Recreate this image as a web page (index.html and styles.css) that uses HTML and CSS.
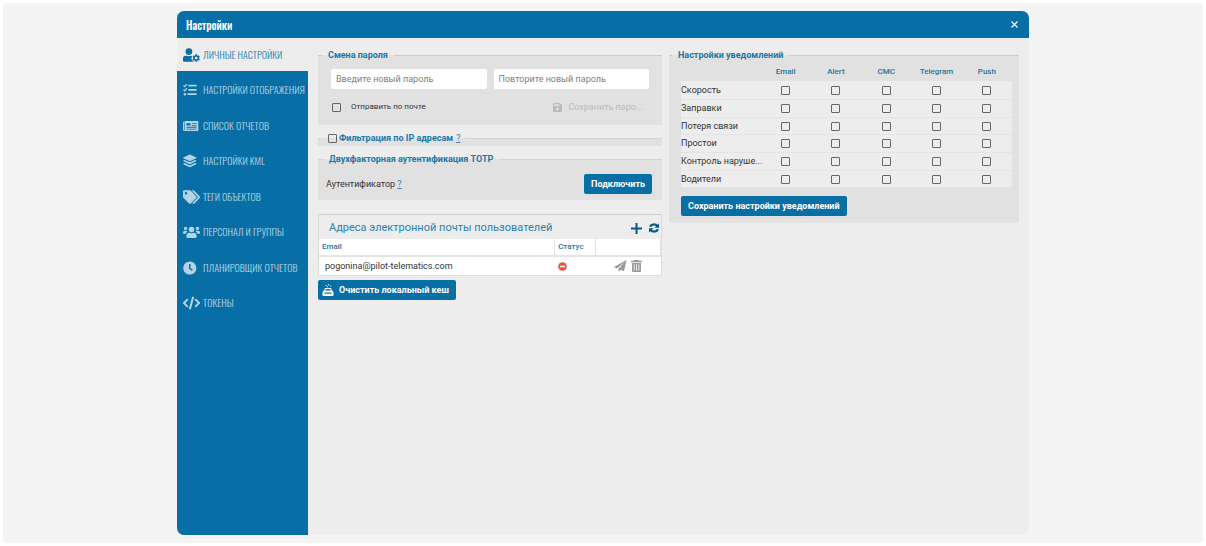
FILE: index.html
```html
<!DOCTYPE html>
<html lang="ru">
<head>
<meta charset="utf-8">
<meta name="viewport" content="width=device-width, initial-scale=1">
<title>Настройки</title>
<link rel="stylesheet" href="styles.css">
</head>
<body>
<div class="backdrop">
<section class="dialog" aria-label="Настройки">
  <header class="titlebar">
    <h1 class="title">Настройки</h1>
    <button class="close" type="button" aria-label="Закрыть"><svg width="7" height="7" viewBox="0 0 7 7"><path d="M.5.5l6 6M6.5.5l-6 6" stroke="currentColor" stroke-width="1.1"/></svg></button>
  </header>
  <div class="body">
    <nav class="sidebar"><div class="items">
      <a class="item active" href="#"><svg class="ico" viewBox="0 0 640 512"><path d="M224 256A128 128 0 1 0 224 0a128 128 0 0 0 0 256zM90 288C40 290 0 332 0 384v80c0 27 21 48 48 48h348c-8-9-12-20-10-32-18-9-28-18-38-28-16-18-30-42-36-64 0-20 8-34 26-46-4-18-4-34 0-50-16-4-30-4-32-4-50 24-112 24-164 0z"/><path d="M464 240h64l9 42 24 14 41-13 32 55-32 29v30l32 29-32 55-41-13-24 14-9 42h-64l-9-42-24-14-41 13-32-55 32-29v-30l-32-29 32-55 41 13 24-14zm32 90a52 52 0 1 0 0 104 52 52 0 0 0 0-104z" fill-rule="evenodd" transform="translate(0 -10)"/></svg><span>ЛИЧНЫЕ НАСТРОЙКИ</span></a>
      <a class="item" href="#"><svg class="ico" viewBox="0 0 640 512"><path d="M20 84l44 44 84-96M20 240l44 44 84-96" fill="none" stroke="currentColor" stroke-width="48"/><circle cx="70" cy="416" r="46"/><path d="M200 56h312v68H200zM200 216h312v68H200zM170 380h342v68H170z"/></svg><span>НАСТРОЙКИ ОТОБРАЖЕНИЯ</span></a>
      <a class="item" href="#"><svg class="ico" viewBox="0 0 640 512"><path fill-rule="evenodd" d="M88 64h464q24 0 24 24v336q0 24-24 24H48q-48 0-48-48V120q0-24 24-24h40V88q0-24 24-24zM36 128v272q0 12 12 12t12-12V128zM128 150v90h160v-90zM336 150v30h176v-30zM336 220v30h176v-30zM128 288v32h384v-32zM128 358v32h384v-32z"/></svg><span>СПИСОК ОТЧЕТОВ</span></a>
      <a class="item" href="#"><svg class="ico" viewBox="0 0 640 512"><path d="M12 128L232 18q24-10 48 0l220 110q20 10 0 20L280 258q-24 10-48 0L12 148q-20-10 0-20z"/><path d="M12 236l50-22 160 76q34 14 68 0l160-76 50 22q20 10 0 20L280 366q-24 10-48 0L12 256q-20-10 0-20z"/><path d="M12 354l50-22 160 76q34 14 68 0l160-76 50 22q20 10 0 20L280 484q-24 10-48 0L12 374q-20-10 0-20z"/></svg><span>НАСТРОЙКИ KML</span></a>
      <a class="item" href="#"><svg class="ico" viewBox="0 0 640 512"><path fill-rule="evenodd" d="M498 226L286 14Q272 0 252 0H48Q0 0 0 48v204q0 20 14 34l212 212q34 28 68 0l204-204q28-34 0-68zM112 64a48 48 0 1 1 0 96 48 48 0 0 1 0-96z"/><path d="M626 226L414 14Q400 0 380 0h-60l220 230q24 34 0 68L356 482l10 16q34 28 68 0l192-204q28-34 0-68z"/></svg><span>ТЕГИ ОБЪЕКТОВ</span></a>
      <a class="item" href="#"><svg class="ico" viewBox="0 0 640 512"><circle cx="96" cy="120" r="62"/><circle cx="544" cy="120" r="62"/><circle cx="320" cy="160" r="104"/><path d="M64 208h64q28 0 44 18-54 30-66 94H28Q0 320 0 290v-18q0-64 64-64zM512 208h64q64 0 64 64v18q0 30-28 30h-78q-12-64-66-94 16-18 44-18zM240 288q80 36 160 0 112 8 112 120v24q0 48-48 48H176q-48 0-48-48v-24q0-112 112-120z"/></svg><span>ПЕРСОНАЛ И ГРУППЫ</span></a>
      <a class="item" href="#"><svg class="ico" viewBox="0 0 640 512"><path fill-rule="evenodd" d="M256 8a248 248 0 1 0 0 496 248 248 0 0 0 0-496zM228 104h56v154l84 60-34 46-106-78z"/></svg><span>ПЛАНИРОВЩИК ОТЧЕТОВ</span></a>
      <a class="item" href="#"><svg class="ico" viewBox="0 0 640 512"><path d="M180 110L36 256l144 146M460 110l144 146-144 146M382 20L258 492" fill="none" stroke="currentColor" stroke-width="76"/></svg><span>ТОКЕНЫ</span></a>
    </div></nav>
    <main class="content">
      <div class="col">
        <fieldset class="group">
          <legend>Смена пароля</legend>
          <div class="pw">
            <input class="text" type="password" placeholder="Введите новый пароль" aria-label="Новый пароль">
            <input class="text" type="password" placeholder="Повторите новый пароль" aria-label="Повтор пароля">
          </div>
          <div class="pwrow">
            <label class="check"><input class="box" type="checkbox">Отправить по почте</label>
            <button class="ghost" type="button" disabled><svg width="9" height="9" viewBox="0 0 9 9"><path fill-rule="evenodd" fill="currentColor" d="M1 0h6l2 2v6q0 1-1 1H1Q0 9 0 8V1q0-1 1-1zM1.200 1.200v2h5v-2zM4.500 4.700a1.400 1.400 0 1 0 0 2.800 1.400 1.400 0 0 0 0-2.800z"/></svg><span>Сохранить паро...</span></button>
          </div>
        </fieldset>
        <fieldset class="group slim">
          <legend><span class="ipline"><label class="iplabel"><input class="box" type="checkbox">Фильтрация по IP адресам</label><a class="help" href="#">?</a></span></legend>
        </fieldset>
        <fieldset class="group totp">
          <legend>Двухфакторная аутентификация TOTP</legend>
          <div class="totprow"><span>Аутентификатор <a class="help" href="#">?</a></span><button class="btn" type="button">Подключить</button></div>
        </fieldset>
        <section class="mail">
          <div class="mailhead">
            <h2 class="mailtitle">Адреса электронной почты пользователей</h2>
            <button class="tool" type="button" aria-label="Добавить"><svg width="11" height="11" viewBox="0 0 11 11"><path d="M5.500 0v11M0 5.500h11" stroke="currentColor" stroke-width="2"/></svg></button>
            <button class="tool" type="button" aria-label="Обновить"><svg width="10" height="10" viewBox="0 0 10 10"><path d="M1 3.600Q2.300 1.300 5 1.300q2 0 3.300 1.700M9 6.400Q7.700 8.700 5 8.700q-2 0-3.300-1.700" fill="none" stroke="currentColor" stroke-width="2.200"/><path fill="currentColor" d="M10 .4v4.300H5.300zM0 9.600V5.300h4.700z"/></svg></button>
          </div>
          <table class="mailtable">
            <thead><tr><th class="c1">Email</th><th class="c2">Статус</th><th></th></tr></thead>
            <tbody><tr><td>pogonina@pilot-telematics.com</td>
            <td><svg class="status" width="9" height="9" viewBox="0 0 9 9"><circle cx="4.500" cy="4.500" r="4.300" fill="#e8543a"/><path d="M2 4.500h5" stroke="#fff" stroke-width="1.500"/></svg></td>
            <td><div class="acts">
              <button class="act" type="button" aria-label="Отправить"><svg width="13" height="12" viewBox="0 0 13 12"><path fill="currentColor" d="M12.500 0L0 7l3 1.400L10.500 2 4.500 9v3l2-2.200L10 11.300z"/></svg></button>
              <button class="act" type="button" aria-label="Удалить"><svg width="11" height="12" viewBox="0 0 11 12"><path fill="currentColor" d="M3.500 0h4l.6.8H11v1.400H0V.800h2.900z"/><path fill="currentColor" fill-rule="evenodd" d="M1 3h9v8q0 1-1 1H2q-1 0-1-1zM2.700 4.300v6.400h.8V4.300zM5.100 4.300v6.400h.8V4.300zM7.500 4.300v6.400h.8V4.300z"/></svg></button>
            </div></td></tr></tbody>
          </table>
        </section>
        <button class="btn cache" type="button"><svg width="12" height="12" viewBox="0 0 12 12"><path d="M3.500 1.500h1M6 .8h1M5 2.800h1M8.200 1.800h1" stroke="currentColor"/><path fill="currentColor" fill-rule="evenodd" d="M3 4h6l1 2.500q1.500.5 1.500 2V11q0 1-1 1h-9q-1 0-1-1V8.500q0-1.500 1.500-2zM3.800 5L3.300 6.500h5.400L8.200 5zM2.500 8.500v1.200h7V8.500z"/></svg><span>Очистить локальный кеш</span></button>
      </div>
      <div class="col">
        <fieldset class="group notify">
          <legend>Настройки уведомлений</legend>
          <table class="grid">
            <thead><tr><td class="name"></td><th>Email</th><th>Alert</th><th>СМС</th><th>Telegram</th><th>Push</th></tr></thead>
            <tbody>
              <tr><th>Скорость</th><td><input class="box" type="checkbox" aria-label="Скорость, Email"></td><td><input class="box" type="checkbox" aria-label="Скорость, Alert"></td><td><input class="box" type="checkbox" aria-label="Скорость, СМС"></td><td><input class="box" type="checkbox" aria-label="Скорость, Telegram"></td><td><input class="box" type="checkbox" aria-label="Скорость, Push"></td></tr>
              <tr><th>Заправки</th><td><input class="box" type="checkbox" aria-label="Заправки, Email"></td><td><input class="box" type="checkbox" aria-label="Заправки, Alert"></td><td><input class="box" type="checkbox" aria-label="Заправки, СМС"></td><td><input class="box" type="checkbox" aria-label="Заправки, Telegram"></td><td><input class="box" type="checkbox" aria-label="Заправки, Push"></td></tr>
              <tr><th>Потеря связи</th><td><input class="box" type="checkbox" aria-label="Потеря связи, Email"></td><td><input class="box" type="checkbox" aria-label="Потеря связи, Alert"></td><td><input class="box" type="checkbox" aria-label="Потеря связи, СМС"></td><td><input class="box" type="checkbox" aria-label="Потеря связи, Telegram"></td><td><input class="box" type="checkbox" aria-label="Потеря связи, Push"></td></tr>
              <tr><th>Простои</th><td><input class="box" type="checkbox" aria-label="Простои, Email"></td><td><input class="box" type="checkbox" aria-label="Простои, Alert"></td><td><input class="box" type="checkbox" aria-label="Простои, СМС"></td><td><input class="box" type="checkbox" aria-label="Простои, Telegram"></td><td><input class="box" type="checkbox" aria-label="Простои, Push"></td></tr>
              <tr><th>Контроль наруше...</th><td><input class="box" type="checkbox" aria-label="Контроль, Email"></td><td><input class="box" type="checkbox" aria-label="Контроль, Alert"></td><td><input class="box" type="checkbox" aria-label="Контроль, СМС"></td><td><input class="box" type="checkbox" aria-label="Контроль, Telegram"></td><td><input class="box" type="checkbox" aria-label="Контроль, Push"></td></tr>
              <tr><th>Водители</th><td><input class="box" type="checkbox" aria-label="Водители, Email"></td><td><input class="box" type="checkbox" aria-label="Водители, Alert"></td><td><input class="box" type="checkbox" aria-label="Водители, СМС"></td><td><input class="box" type="checkbox" aria-label="Водители, Telegram"></td><td><input class="box" type="checkbox" aria-label="Водители, Push"></td></tr>
            </tbody>
          </table>
          <button class="btn" type="button">Сохранить настройки уведомлений</button>
        </fieldset>
      </div>
    </main>
  </div>
</section>
</div>
</body>
</html>
```
FILE: styles.css
```css
* { box-sizing: border-box; }
body {
  margin: 0;
  padding: 3px;
  background: #fff;
  font: 9px/12px Roboto, "Liberation Sans", sans-serif;
  color: #333;
}
button, input { font: inherit; color: inherit; margin: 0; }
button { border: 0; padding: 0; background: none; }
svg { display: block; flex: none; }
.backdrop {
  display: flex;
  justify-content: center;
  min-height: calc(100vh - 6px);
  padding: 8px 0;
  background: #f4f4f4;
  border-radius: 4px;
}
.dialog {
  display: flex;
  flex-direction: column;
  width: 71%;
  background: #ededed;
  border-radius: 7px;
  overflow: hidden;
}
.titlebar {
  display: flex;
  align-items: center;
  justify-content: space-between;
  height: 27px;
  padding: 0 11px 0 9px;
  background: #076fa5;
  color: #fff;
}
.title, .item {
  font-family: Oswald, "Roboto Condensed", "Liberation Sans Narrow", "Open Sans Condensed", "DejaVu Sans Condensed", sans-serif;
}
.title { margin: 0; font-size: 11px; line-height: 16px; font-weight: 500; }
.body { display: flex; flex: 1; }
.sidebar {
  width: 131px;
  flex: none;
  background: #076fa5;
}
.items {
  display: grid;
  grid-auto-rows: 33px;
  align-content: space-between;
  height: 282px;
}
.item {
  display: flex;
  align-items: center;
  gap: 3px;
  padding-left: 6px;
  font-size: 10px;
  line-height: 16px;
  font-weight: 300;
  color: #b4d4e4;
  text-decoration: none;
  white-space: nowrap;
}
.item.active { background: #ededed; color: #2a82b0; }
.item.active .ico { color: #076fa5; }
.ico { width: 17px; height: 14px; fill: currentColor; }
.content {
  flex: 1;
  display: grid;
  grid-template-columns: 344fr 350fr;
  gap: 7px;
  align-items: start;
  padding: 10px 10px 0 10px;
}
.group {
  margin: 0;
  min-width: 0;
  padding: 0 13px;
  border: 0;
  border-top: 1px solid #ccc;
  background: #e1e1e1;
}
.group legend {
  margin-left: -9px;
  padding: 0 6px;
  font-size: 9px;
  line-height: 14px;
  font-weight: 700;
  color: #1a78ab;
}
.pw { display: grid; grid-template-columns: 1fr 1fr; gap: 7px; margin-top: 7px; }
.text {
  width: 100%;
  height: 20px;
  padding: 0 5px;
  border: 0;
  border-radius: 2px;
  background: #fff;
}
.text::placeholder { color: #808080; opacity: 1; }
.pwrow { display: flex; align-items: center; justify-content: space-between; height: 36px; padding: 0 6px 0 1px; }
.check { display: flex; align-items: center; gap: 10px; font-size: 8px; }
.box {
  appearance: none;
  display: inline-block;
  width: 9px;
  height: 9px;
  border: 1px solid #666;
  border-radius: 1px;
  vertical-align: middle;
}
.box:checked { background: #076fa5; }
.ghost { display: flex; align-items: center; gap: 6px; color: #bbb; }
.slim { margin-top: 6px; padding-bottom: 1px; border-top-color: #d5d5d5; }
.ipline { display: flex; gap: 3px; }
.iplabel { display: flex; align-items: center; gap: 2px; }
.help { color: #5577a8; font-weight: 400; }
.totp { margin-top: 6px; padding: 0 10px 6px 8px; border-top-color: #d5d5d5; }
.totp legend { margin-left: -3px; }
.totprow { display: flex; align-items: center; justify-content: space-between; margin-top: 8px; }
.btn {
  display: inline-flex;
  align-items: center;
  height: 20px;
  padding: 0 7px;
  border-radius: 2px;
  background: #076fa5;
  color: #fff;
  font-weight: 700;
}
.mail { margin-top: 14px; border: 1px solid #ddd; border-top-color: #ccc; }
.mailhead { display: flex; align-items: center; height: 24px; gap: 7px; padding: 2px 2px 0 10px; }
.mailtitle { flex: 1; margin: 0; font-size: 11px; line-height: 14px; font-weight: 400; color: #2a82b0; }
.tool { color: #075985; }
.mailtable, .grid { width: 100%; border-collapse: collapse; table-layout: fixed; }
.mailtable { background: #fff; }
.mailtable th { height: 17px; padding: 0 3px; text-align: left; font-weight: 500; color: #2a7399; border-bottom: 2px solid #e4e4e4; border-right: 1px solid #e4e4e4; font-size: 8px; }
.mailtable td { height: 19px; padding: 0 6px; }
.mailtable td:nth-child(2) { padding: 0 3px; }
.c1 { width: 69%; }
.c2 { width: 12%; }
.acts { display: flex; justify-content: flex-end; gap: 4px; padding-right: 13px; color: #999; }
.cache { gap: 5px; margin-top: 4px; padding: 0 7px 0 4px; }
.notify { padding: 0 7px 7px 12px; }
.grid thead { height: 19px; }
.grid thead th { padding: 0; font-size: 8px; font-weight: 500; color: #2a7399; }
.grid .name { width: 24%; }
.grid tbody { background: #ededed; }
.grid tbody tr { height: 18px; border-bottom: 1px solid #e4e4e4; }
.grid tbody tr:nth-child(3n) { height: 17px; }
.grid td { padding: 0; text-align: center; line-height: 10px; }
.grid tbody th { padding: 0; text-align: left; font-weight: 400; white-space: nowrap; }
.notify .btn { margin-top: 8px; }
```
